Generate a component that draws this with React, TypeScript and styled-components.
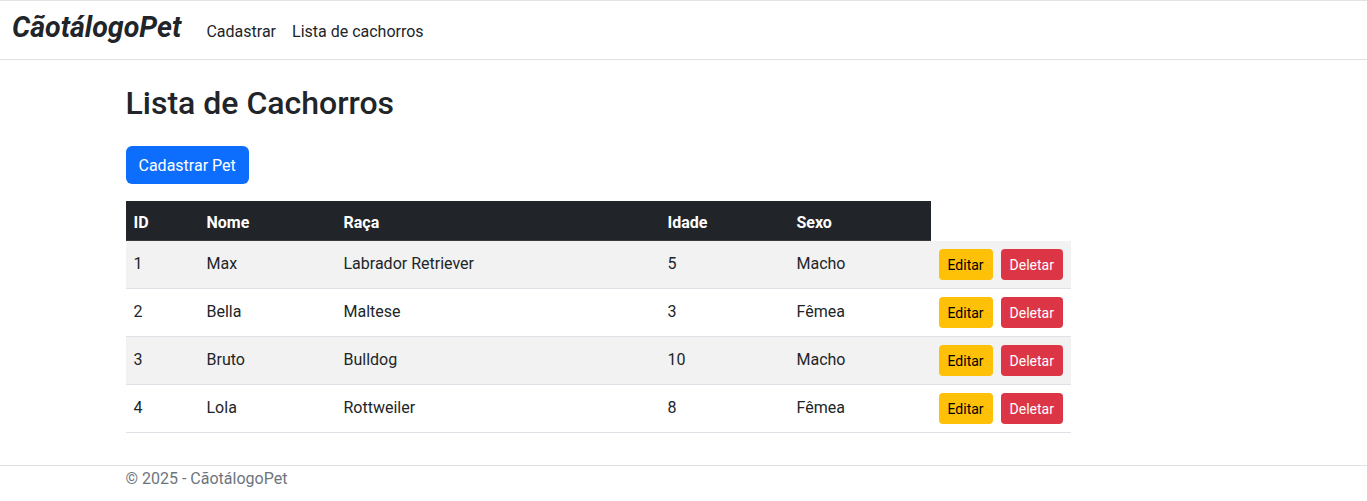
import React from "react";
import styled, { createGlobalStyle } from "styled-components";

const GlobalStyle = createGlobalStyle`
  html, body { margin: 0; padding: 0; background: #fff; }
  body {
    font-family: Roboto, "Liberation Sans", Arial, sans-serif;
    font-size: 16px;
    line-height: 1.5;
    color: #212529;
  }
  *, *::before, *::after { box-sizing: border-box; }
`;

const NavBar = styled.header`
  height: 60px;
  border-top: 1px solid #e3e3e3;
  border-bottom: 1px solid #e0e0e0;
  display: flex;
  align-items: baseline;
  padding: 5px 12px 0;
`;

const Brand = styled.a`
  font-size: 28.6px;
  font-weight: 700;
  font-style: italic;
  color: #212529;
  text-decoration: none;
  margin-right: 17px;
  line-height: 1.5;
`;

const NavLink = styled.a`
  font-size: 16px;
  color: #212529;
  text-decoration: none;
  padding: 0 8px;
`;

const Container = styled.div`
  max-width: 1140px;
  margin: 0 auto;
  padding: 0 12px;
`;

const Main = styled.main`
  padding: 16px 0 16px;
`;

const Title = styled.h2`
  font-size: 32px;
  font-weight: 500;
  line-height: 1.2;
  margin: 8px 0 24px;
`;

const Button = styled.button<{ $variant: "primary" | "warning" | "danger"; $small?: boolean }>`
  font-family: inherit;
  display: inline-block;
  border: 1px solid transparent;
  cursor: pointer;
  font-size: ${(p) => (p.$small ? "14px" : "16px")};
  line-height: 1.5;
  padding: ${(p) => (p.$small ? "5px 8px 3px" : "7px 12px 5px")};
  border-radius: ${(p) => (p.$small ? "4px" : "6px")};
  background: ${(p) =>
    p.$variant === "primary" ? "#0d6efd" : p.$variant === "warning" ? "#ffc107" : "#dc3545"};
  color: ${(p) => (p.$variant === "warning" ? "#000" : "#fff")};
`;

const Table = styled.table`
  width: 945px;
  border-collapse: collapse;
  table-layout: fixed;
  margin: 17px 0 16px;
`;

const Th = styled.th`
  background: #212529;
  color: #fff;
  text-align: left;
  font-weight: 700;
  padding: 10px 8px 5px;
  border-bottom: 1px solid #373b3e;
  line-height: 24px;
`;

const Row = styled.tr<{ $striped: boolean }>`
  background: ${(p) => (p.$striped ? "#f2f2f2" : "#fff")};
`;

const Td = styled.td<{ $actions?: boolean }>`
  padding: ${(p) => (p.$actions ? "8px" : "11px 8px 5px")};
  border-bottom: 1px solid #dee2e6;
  vertical-align: top;
  line-height: 24px;
`;

const Actions = styled.div`
  display: flex;
  gap: 8px;
`;

const Footer = styled.footer`
  border-top: 1px solid #dee2e6;
  color: #6c757d;
  line-height: 24px;
  padding-top: 1px;
`;

const dogs = [
  { id: 1, nome: "Max", raca: "Labrador Retriever", idade: 5, sexo: "Macho" },
  { id: 2, nome: "Bella", raca: "Maltese", idade: 3, sexo: "Fêmea" },
  { id: 3, nome: "Bruto", raca: "Bulldog", idade: 10, sexo: "Macho" },
  { id: 4, nome: "Lola", raca: "Rottweiler", idade: 8, sexo: "Fêmea" },
];

const widths = [73, 137, 324, 129, 142, 140];

export default function App() {
  return (
    <>
      <GlobalStyle />
      <NavBar>
        <Brand href="#">CãotálogoPet</Brand>
        <NavLink href="#">Cadastrar</NavLink>
        <NavLink href="#">Lista de cachorros</NavLink>
      </NavBar>
      <Container>
        <Main>
          <Title>Lista de Cachorros</Title>
          <Button $variant="primary">Cadastrar Pet</Button>
          <Table>
            <colgroup>
              {widths.map((w, i) => (
                <col key={i} style={{ width: w }} />
              ))}
            </colgroup>
            <thead>
              <tr>
                <Th>ID</Th>
                <Th>Nome</Th>
                <Th>Raça</Th>
                <Th>Idade</Th>
                <Th>Sexo</Th>
              </tr>
            </thead>
            <tbody>
              {dogs.map((d, i) => (
                <Row key={d.id} $striped={i % 2 === 0}>
                  <Td>{d.id}</Td>
                  <Td>{d.nome}</Td>
                  <Td>{d.raca}</Td>
                  <Td>{d.idade}</Td>
                  <Td>{d.sexo}</Td>
                  <Td $actions>
                    <Actions>
                      <Button $variant="warning" $small>Editar</Button>
                      <Button $variant="danger" $small>Deletar</Button>
                    </Actions>
                  </Td>
                </Row>
              ))}
            </tbody>
          </Table>
        </Main>
      </Container>
      <Footer>
        <Container>© 2025 - CãotálogoPet</Container>
      </Footer>
    </>
  );
}
